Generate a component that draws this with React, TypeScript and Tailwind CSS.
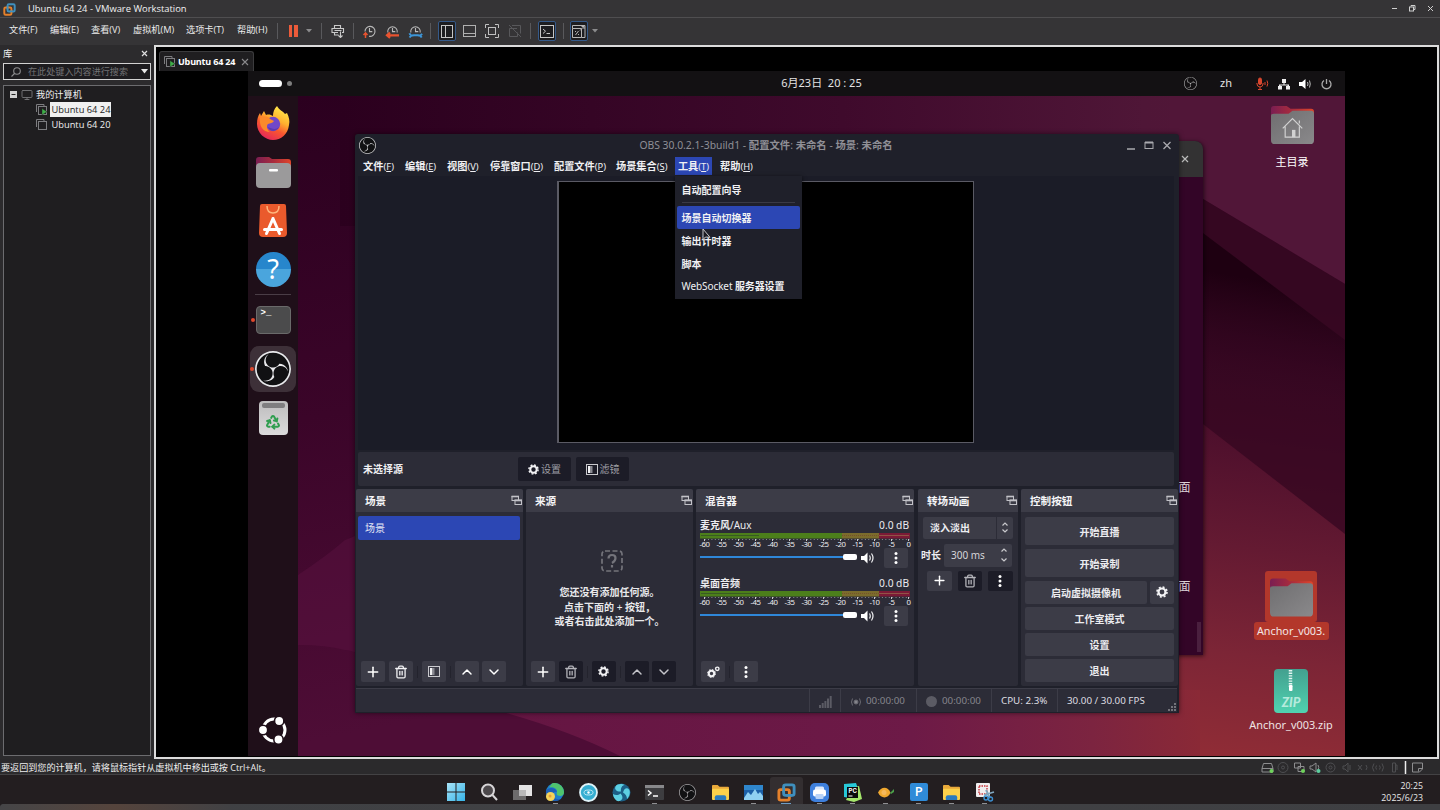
import React from 'react';
import { SiObsstudio } from 'react-icons/si';
import {
  Monitor, Plus, Trash2, ChevronUp, ChevronDown, Recycle,
} from 'lucide-react';

const CJK = /([\u3000-\u9fff\uff00-\uffef]+)/;

/** Chinese runs are set bold, Latin runs regular. */
function Mix({ children }: { children: string }) {
  return (
    <>
      {children.split(CJK).map((s, i) => (i % 2 ? <b key={i} className="font-bold">{s}</b> : <span key={i}>{s}</span>))}
    </>
  );
}

const Sep = ({ w }: { w: string }) => (
  <div className={`flex justify-center ${w}`}><div className="h-[16px] w-px bg-[#59595c]" /></div>
);

const Caret = () => <svg width="6" height="4"><path d="M0 0h6L3 3.5z" fill="#8b8b8d" /></svg>;

function VmwareLogo({ size }: { size: number }) {
  return (
    <svg width={size} height={size} viewBox="0 0 20 20" fill="none">
      <rect x="7" y="2" width="11" height="11" rx="2" stroke="#3f8fbd" strokeWidth="3" />
      <rect x="2" y="7" width="11" height="11" rx="2" stroke="#e5812b" strokeWidth="3" />
      <path d="M7 10V4.500M10 13h6" stroke="#3f8fbd" strokeWidth="2.800" />
    </svg>
  );
}

function ClockIcon({ kind }: { kind: number }) {
  return (
    <svg width="15" height="15" viewBox="0 0 15 15" fill="none" stroke="#b9b9b9" strokeWidth="1.1">
      {kind === 0 ? <path d="M3 7.500A5 5 0 1 1 7 12.300" /> : <path d="M2.800 8.500A4.800 4.800 0 1 1 12.200 8.500" />}
      <path d="M7.500 4v3.600h2.800" />
      {kind === 0 && <path d="M3.500 8.500v5.500M1.500 11l2-2.200 2 2.200" stroke="#e9532f" strokeWidth="1.500" />}
      {kind === 1 && <path d="M2 11.300h12M5 8.700L2 11.300 5 13.900" stroke="#e9532f" strokeWidth="2.200" />}
      {kind === 2 && <path d="M1.500 9.300c.5 2 2.500 2.600 4 2h4.500c1.500.6 3.200 0 4-1.500M1.500 13.500c1-1.500 2-2 3.500-2.200M10.500 11.300c1.500 0 2.500.8 3.200 2.200" stroke="#3d96d8" strokeWidth="1.900" />}
    </svg>
  );
}

const Boxed = ({ children }: { children: React.ReactNode }) => (
  <div className="flex h-[20px] w-[18px] items-center justify-center rounded-[2px] border border-[#355a8a] bg-[#1d1d20]">{children}</div>
);

function TitleBar() {
  return (
    <header className="flex h-[17px] items-center bg-[#353436] text-[9.400px] text-[#f2f2f2]">
      <div className="flex w-[28px] justify-start pt-px pl-[3px]"><VmwareLogo size={13} /></div>
      <div className="flex-1 pt-px">Ubuntu 64 24 - VMware Workstation</div>
      <svg width="48" height="9" fill="none" stroke="#cfcfcf" strokeWidth="1" className="mr-px">
        <path d="M1 4.500h5M37 2l5 5M42 2l-5 5" />
        <rect x="18.500" y="3" width="4" height="4" />
        <path d="M20 2.500V1.500h4v4h-1" />
      </svg>
    </header>
  );
}

function Toolbar() {
  const menus: [string, string][] = [
    ['文件(F)', 'w-[41px]'], ['编辑(E)', 'w-[41px]'], ['查看(V)', 'w-[42px]'],
    ['虚拟机(M)', 'w-[53px]'], ['选项卡(T)', 'w-[51px]'], ['帮助(H)', 'w-[33px]'],
  ];
  return (
    <nav className="flex h-[28px] items-center border-t border-[#4f4e50] bg-[#353436] pb-px pl-[9px] text-[9.200px] text-[#ececec]">
      {menus.map(([m, w]) => <div key={m} className={`pb-[2px] whitespace-nowrap ${w}`}>{m}</div>)}
      <Sep w="w-[14px]" />
      <div className="flex w-[18px] justify-center gap-[2px]"><i className="h-[12px] w-[3.500px] bg-[#ec5b3a]" /><i className="h-[12px] w-[3.500px] bg-[#ec5b3a]" /></div>
      <div className="flex w-[13px] justify-center"><Caret /></div>
      <Sep w="w-[12px]" />
      <div className="flex w-[21px] justify-center">
        <svg width="14" height="14" viewBox="0 0 14 14" fill="none" stroke="#c9c9c9" strokeWidth="1.100">
          <path d="M3.500 4.500v-3h6v3M7 8.500H1v-4h11.500v4H11M3.500 8.500v2.500H7.500M3.500 6.500h7M9.500 7.500v6M7.500 11.500l2 2 2-2" />
        </svg>
      </div>
      <Sep w="w-[11px]" />
      <div className="flex w-[21px] justify-center"><ClockIcon kind={0} /></div>
      <div className="flex w-[25px] justify-center"><ClockIcon kind={1} /></div>
      <div className="flex w-[20px] justify-center"><ClockIcon kind={2} /></div>
      <Sep w="w-[11px]" />
      <div className="flex w-[22px] justify-center">
        <Boxed><svg width="12" height="13" fill="none" stroke="#c5c5c5"><rect x=".5" y=".5" width="11" height="12" /><path d="M4.500 1v11" /></svg></Boxed>
      </div>
      <div className="flex w-[23px] justify-center"><svg width="13" height="12" fill="none" stroke="#b0b0b0"><rect x=".5" y=".5" width="12" height="11" /><path d="M1 8.500h11" /></svg></div>
      <div className="flex w-[22px] justify-center"><svg width="14" height="14" fill="none" stroke="#c0c0c0"><path d="M.5 4V.5H4M10 .5h3.500V4M13.500 10v3.500H10M4 13.500H.5V10" /><rect x="3.500" y="3.500" width="7" height="7" /></svg></div>
      <div className="flex w-[23px] justify-center"><svg width="14" height="14" fill="none" stroke="#58585b"><path d="M4 1.500h8.500v8M9 4.500H1.500v8H9.500v-4M1 1l12 12" /></svg></div>
      <Sep w="w-[9px]" />
      <div className="flex w-[23px] justify-center">
        <Boxed><svg width="14" height="13" fill="none" stroke="#c5c5c5"><rect x=".5" y=".5" width="13" height="12" /><path d="M3 4l2.500 2.200L3 8.500M6.500 8.500H10" /></svg></Boxed>
      </div>
      <Sep w="w-[10px]" />
      <div className="flex w-[22px] justify-center">
        <Boxed><svg width="14" height="13" fill="none" stroke="#b5b5b5"><path d="M.5 3.500v9h9v-9zM.5 3.500V.5h12.500v12H9.500M8 5.500l4-4M9.500 1.500h2.500V4" /><path d="M3.500 10l3-4M3 6.500h1M6 9.500h1" /></svg></Boxed>
      </div>
      <div className="flex w-[10px] justify-center"><Caret /></div>
    </nav>
  );
}

function VmIcon({ on }: { on?: boolean }) {
  return (
    <svg width="11" height="11" viewBox="0 0 11 11" fill="none" stroke="#7d7d80" strokeWidth="1">
      <path d="M.5 8V.5H8V2" /><rect x="2.500" y="2.500" width="8" height="8" />
      {on && <path d="M6 4.500v6.500L11 7.800z" fill="#3fae49" stroke="#1f1e20" strokeWidth=".4" />}
    </svg>
  );
}

function Library() {
  return (
    <aside className="flex w-[154px] flex-col bg-[#2c2b2d] pl-[3px] pr-[3px] text-[9.200px] text-[#f0f0f0]">
      <div className="flex h-[17px] items-center justify-between pr-[3px]">
        <span>库</span>
        <svg width="7" height="7" stroke="#e0e0e0" strokeWidth="1.200"><path d="M1 1l5 5M6 1L1 6" /></svg>
      </div>
      <div className="mt-px flex h-[17px] w-[148px] items-center border border-[#d2d2d2] bg-[#1d1c1f] pl-[7px] pr-[2px]">
        <svg width="10" height="10" fill="none" stroke="#8b8b8d" strokeWidth="1.100"><circle cx="6" cy="4" r="3.300" /><path d="M3.500 6.500L.5 9.500" /></svg>
        <span className="ml-[7px] flex-1 whitespace-nowrap text-[9.100px] text-[#737375]">在此处键入内容进行搜索</span>
        <svg width="7" height="5"><path d="M0 0h7L3.500 4.500z" fill="#e8e8e8" /></svg>
      </div>
      <div className="mt-[5px] mb-[3px] flex w-[148px] flex-1 flex-col border border-[#6c6c6f] bg-[#1f1e20] pt-[1px]">
        <div className="flex h-[15px] items-center pl-[6px]">
          <svg width="7" height="7"><rect width="7" height="7" fill="#d2d2d2" /><path d="M1.500 3.500h4" stroke="#222" /></svg>
          <Monitor size={12} strokeWidth={1.800} className="ml-[4px] text-[#77777a]" />
          <span className="ml-[3px]">我的计算机</span>
        </div>
        <div className="flex h-[15px] items-center pl-[32px]"><VmIcon on /><span className="ml-[3px] bg-[#f0f0f0] pr-px pl-[1.500px] text-[9.300px] leading-[15px] text-[#1c1c1c]">Ubuntu 64 24</span></div>
        <div className="flex h-[15px] items-center pl-[32px]"><VmIcon /><span className="ml-[3px] pl-[1.500px] text-[9.300px]">Ubuntu 64 20</span></div>
      </div>
    </aside>
  );
}

function ObsLogo({ size, ring }: { size: number; ring?: string }) {
  return (
    <div className={`flex items-center justify-center rounded-full bg-[#111113] ${ring ?? 'text-[#c9c9cc]'}`}>
      <SiObsstudio size={size} />
    </div>
  );
}

function Folder({ house, w, h }: { house?: boolean; w: number; h: number }) {
  return (
    <svg width={w} height={h} viewBox="0 0 44 40">
      <defs>
        <linearGradient id="fb" x1="0" x2="1"><stop offset="0" stopColor="#7a1e52" /><stop offset=".5" stopColor="#a92c3d" /><stop offset="1" stopColor="#e0452a" /></linearGradient>
        <linearGradient id="ff" x1="0" y1="0" x2="1" y2="1"><stop offset="0" stopColor="#6f6e70" /><stop offset="1" stopColor="#8a898b" /></linearGradient>
      </defs>
      <path d="M0 4q0-3 3-3h13l4 3h21q3 0 3 3v15H0z" fill="url(#fb)" />
      <path d="M0 11q0-2 3-2h15l4-3h19q3 0 3 3v27q0 4-4 4H4q-4 0-4-4z" fill="url(#ff)" />
      {house && <><path d="M12 24l10-10 10 10M14.500 22v11h14.500V22M29 16v3" fill="none" stroke="#d2d2d2" strokeWidth="1.200" /><path d="M21.500 25.500h3.500V33h-3.500z" fill="#d2d2d2" /></>}
    </svg>
  );
}

function Firefox() {
  return (
    <svg width="34" height="34" viewBox="0 0 34 34">
      <defs>
        <linearGradient id="fx" x1=".8" y1="0" x2=".3" y2="1"><stop offset="0" stopColor="#fff04f" /><stop offset=".4" stopColor="#ffb02e" /><stop offset=".65" stopColor="#f9572f" /><stop offset="1" stopColor="#e5255c" /></linearGradient>
      </defs>
      <path d="M21 0c2 4 6 5 8 8l2-1c2 4 3 8 2 12-1 9-8 15-16 15S1 27 1 18c0-5 1-8 3-11l1 3 3-5 2 4c3-1 5 0 7 1 0-4 1-7 4-10z" fill="url(#fx)" />
      <circle cx="17" cy="18" r="7.200" fill="#7048c9" />
      <path d="M4 12c4-2 8-2 10 1l4 2c-1 2-4 2-6 3-2 2-1 6 2 8-7 0-11-6-10-14z" fill="#fb8a2b" />
      <path d="M12 21c1 5 9 5 11 0-3 3-7 2-11 0z" fill="#5a3bb0" />
    </svg>
  );
}

function Dock() {
  return (
    <div className="flex w-[50px] flex-col items-center bg-[#1f0f19]">
      <div className="mt-[10px]"><Firefox /></div>
      <svg className="mt-[16px]" width="35" height="32" viewBox="0 0 35 32">
        <path d="M0 4q0-3 3-3h10l3 2h16q3 0 3 3v8H0z" fill="url(#fb)" />
        <rect y="7" width="35" height="25" rx="4" fill="#9b9a9b" /><rect x="13" y="13" width="9" height="2.600" rx="1" fill="#fff" />
      </svg>
      <svg className="mt-[16px]" width="28" height="33" viewBox="0 0 28 33">
        <path d="M3 0h22q2 0 2 2l1 27q0 4-4 4H4q-4 0-4-4L1 2q0-2 2-2z" fill="#ea5a2c" />
        <path d="M8 2q0 7 6 7t6-7" fill="none" stroke="#ffb57b" strokeWidth="1.500" />
        <path d="M14 14.500L7.500 29.500M14 14.500l6.500 15M5.500 25.500h17" fill="none" stroke="#fff" strokeWidth="3" strokeLinecap="round" />
      </svg>
      <div className="mt-[15px] flex h-[35px] w-[35px] items-center justify-center rounded-full bg-linear-to-b from-[#2786cc] from-50% to-[#4aa5dd] to-50% font-['Noto_Sans'] text-[27px] text-white">?</div>
      <div className="mt-[7px] h-px w-[36px] bg-[#4a3d46]" />
      <div className="relative mt-[11px] flex w-full items-center justify-center">
        <i className="absolute top-[12px] left-[3px] h-[4px] w-[4px] rounded-full bg-[#e0482d]" />
        <div className="flex h-[28px] w-[35px] rounded-[4px] border border-[#6a6a6a] bg-[#4b4b4c] pl-[4px] font-['Liberation_Mono'] text-[9px] leading-[13px] font-bold text-white">&gt;_</div>
      </div>
      <div className="relative mt-[12px] flex h-[46px] w-[46px] items-center justify-center rounded-[9px] bg-[#3d3038]">
        <i className="absolute top-[21px] left-0 h-[4px] w-[4px] rounded-full bg-[#e0482d]" />
        <ObsLogo size={36} ring="text-[#e9e9ec]" />
      </div>
      <div className="mt-[9px] flex h-[34px] w-[29px] flex-col items-center rounded-[4px] bg-linear-to-b from-[#bdbcbd] to-[#dcdbdc] pt-[2px]">
        <div className="h-[5px] w-[23px] rounded-[2px] bg-[#7f7e80]" />
        <Recycle size={16} strokeWidth={3} className="mt-[6px] text-[#2f9e4f]" />
      </div>
      <div className="flex-1" />
      <svg className="mb-[12px]" width="28" height="28" viewBox="0 0 28 28" fill="none">
        <circle cx="15" cy="14" r="11" stroke="#fff" strokeWidth="3" />
        {[[4, 14], [20.200, 5], [19.500, 23.500]].map(([x, y]) => (
          <circle key={y} cx={x} cy={y} r="4.700" fill="#fff" stroke="#1f0f19" strokeWidth="1.600" />
        ))}
      </svg>
    </div>
  );
}

function GnomeBar() {
  return (
    <div className="grid h-[25px] grid-cols-3 items-center bg-[#131113] text-[#e3e3e3]">
      <div className="flex items-center gap-[5px] pl-[11px]"><i className="h-[7px] w-[23px] rounded-full bg-white" /><i className="h-[5px] w-[5px] rounded-full bg-[#7e7e7e]" /></div>
      <div className="pl-[50px] text-center text-[11px] whitespace-nowrap">6月23日&nbsp; 20 : 25</div>
      <div className="flex items-center justify-end pr-[13px] text-[11px]">
        <SiObsstudio size={13} className="text-[#b4b4b4]" />
        <span className="ml-[23px]">zh</span>
        <svg className="ml-[24px]" width="14" height="14" fill="none" stroke="#d9472e"><rect x="2.500" y="1" width="3" height="6.500" rx="1.500" fill="#d9472e" /><path d="M.8 6q0 4 3.200 4t3.200-4M4 10v3M2 12.500h4M9 5v3M11 3.500q1.500 3 0 6" /></svg>
        <svg className="ml-[8px]" width="12" height="12" fill="#eee"><path d="M4 1h4v4H6.500v1.500H11V8h1v3.500H8V8h1.500V7.500h-7V8H4v3.500H0V8h1V6.500h4.500V5H4z" /></svg>
        <svg className="ml-[9px]" width="12" height="12" fill="none" stroke="#bbb"><path d="M0 4h3l3.500-3v10L3 8H0z" fill="#fff" stroke="none" /><path d="M8.500 4q1 2 0 4M10.500 2.500q1.500 3.500 0 7" /></svg>
        <svg className="ml-[10px]" width="11" height="12" fill="none" stroke="#a9a9a9" strokeWidth="1.300"><path d="M3 2.500a4.500 4.500 0 1 0 5 0M5.500 1v5" /></svg>
      </div>
    </div>
  );
}

const Popout = () => (
  <svg width="11" height="11" viewBox="0 0 11 11" fill="none" stroke="#c2c2c8">
    <rect x="1" y="1.500" width="6.500" height="4" /><path d="M.5 1.500H8" strokeWidth="1.600" />
    <rect x="4" y="5" width="6.500" height="4.500" fill="#3c3c47" /><path d="M3.500 5.500H11" strokeWidth="1.600" />
  </svg>
);

function Panel({ title, w, children }: { title: string; w: string; children: React.ReactNode }) {
  return (
    <section className={`flex h-full shrink-0 flex-col rounded-[2px] bg-[#2c2c37] ${w}`}>
      <div className="flex h-[23px] shrink-0 items-center justify-between rounded-t-[2px] bg-[#3c3c47] pr-[1px] pl-[9px] text-[10.600px] font-bold text-[#f4f4f6]">
        <span className="pt-[3px]">{title}</span><Popout />
      </div>
      {children}
    </section>
  );
}

function Btn({ children, dark, cls = 'h-[21px] w-[24px]' }: { children: React.ReactNode; dark?: boolean; cls?: string }) {
  return <div className={`flex shrink-0 items-center justify-center rounded-[2px] ${dark ? 'bg-[#1c1c27]' : 'bg-[#3c3c47]'} ${cls}`}>{children}</div>;
}

const Gear = ({ size = 11 }: { size?: number }) => (
  <svg width={size} height={size} viewBox="0 0 12 12" fill="none" stroke="#f3f3f5"><circle cx="6" cy="6" r="3.500" strokeWidth="2.200" /><circle cx="6" cy="6" r="5" strokeWidth="1.600" strokeDasharray="2 1.930" /></svg>
);
const Bin = ({ dim }: { dim?: boolean }) => <Trash2 size={14} strokeWidth={2.200} className={dim ? 'text-[#b4b4ba]' : 'text-[#f3f3f5]'} />;
const Filter = () => <svg width="12" height="11" fill="none" stroke="#c9c9cd"><rect x=".5" y=".5" width="11" height="10" /><path d="M2 2h2.500v7H2z" fill="#f0f0f2" stroke="none" /><path d="M5.500 2v7" stroke="#8a8a92" strokeWidth="2" /></svg>;
const Dots = () => <svg width="4" height="14" fill="#fff"><circle cx="2" cy="2.500" r="1.500" /><circle cx="2" cy="7" r="1.500" /><circle cx="2" cy="11.500" r="1.500" /></svg>;
const TSep = () => <div className="mx-[4px] h-[12px] w-px bg-[#23232d]" />;

function ListTools({ dim }: { dim?: boolean }) {
  return (
    <div className="mb-[4px] flex items-center pl-[5px]">
      <Btn><Plus size={16} strokeWidth={2.300} className="text-white" /></Btn>
      <div className="w-[3.500px]" /><Btn dark={dim}><Bin dim={dim} /></Btn>
      <TSep /><Btn dark={dim}>{dim ? <Gear /> : <Filter />}</Btn>
      <TSep /><Btn dark={dim}><ChevronUp size={16} strokeWidth={2.200} className={dim ? 'text-[#c4c4ca]' : 'text-white'} /></Btn>
      <div className="w-[3.500px]" /><Btn dark={dim}><ChevronDown size={16} strokeWidth={2.200} className={dim ? 'text-[#c4c4ca]' : 'text-white'} /></Btn>
    </div>
  );
}

function Channel({ name }: { name: string }) {
  const marks = ['-60', '-55', '-50', '-45', '-40', '-35', '-30', '-25', '-20', '-15', '-10', '-5', '0'];
  return (
    <div className="flex h-[58px] flex-col pr-[5px] pl-[4px] text-[#ececf0]">
      <div className="flex h-[15px] items-center justify-between pt-[2px] text-[10px]"><span><Mix>{name}</Mix></span><span className="text-[10.200px]">0.0 dB</span></div>
      <svg className="mt-px" width="210" height="8">
        <rect width="142" height="5.500" fill="#4c7f1b" /><rect x="142" width="37" height="5.500" fill="#7b6c2c" /><rect x="179" width="31" height="5.500" fill="#7b1a36" />
        <path d="M1 2.500h58" stroke="#395a22" /><path d="M142 2.500h37" stroke="#75502b" strokeDasharray="1 1" /><path d="M179 2.500h30" stroke="#8f5446" />
        <path d="M4.600 6.500h205" stroke="#8d8d94" strokeWidth="1" strokeDasharray="1 2.410" />
        {marks.map((m, i) => <path key={m} d={`M${4.500 + i * 17} 6v2`} stroke="#c9c9cd" strokeWidth="1" />)}
      </svg>
      <div className="-mt-px -ml-[4px] flex w-[221px] text-[7.800px] leading-[8px] tracking-[-0.500px]">{marks.map((m) => <span key={m} className="w-[17px] text-center">{m}</span>)}</div>
      <div className="flex items-center">
        <div className="-mt-[2px] flex w-[157px] items-center"><i className="h-[2.500px] w-[143px] bg-[#2f87d9]" /><i className="h-[6px] w-[14px] rounded-[2px] bg-white" /></div>
        <svg className="-mt-px ml-[4px]" width="13" height="12" fill="none" stroke="#f2f2f4" strokeWidth="1.200"><path d="M0 4h3l3.500-3.500v11L3 8H0z" fill="#fff" stroke="none" /><path d="M8.500 3.500q1.500 2.500 0 5M10.500 1.500q3 4.500 0 9" /></svg>
        <div className="flex-1" />
        <Btn cls="mr-px h-[20px] w-[24px]"><Dots /></Btn>
      </div>
    </div>
  );
}

function Spin({ gap }: { gap: string }) {
  return <div className={`flex flex-col items-center ${gap}`}><svg width="6" height="4" fill="none" stroke="#c9c9cd" strokeWidth="1.200"><path d="M.5 3.500L3 1l2.500 2.500" /></svg><svg width="6" height="4" fill="none" stroke="#c9c9cd" strokeWidth="1.200"><path d="M.5.5L3 3 5.500.5" /></svg></div>;
}

function ObsWindow() {
  const menus: [string, string, string][] = [
    ['文件', 'F', 'w-[42px]'], ['编辑', 'E', 'w-[42px]'], ['视图', 'V', 'w-[43px]'], ['停靠窗口', 'D', 'w-[64px]'],
    ['配置文件', 'P', 'w-[62px]'], ['场景集合', 'S', 'w-[59px]'], ['工具', 'T', 'w-[37px]'], ['帮助', 'H', 'w-[42px]'],
  ];
  return (
    <div className="absolute top-[63px] left-[107px] flex h-[579px] w-[824px] flex-col rounded-t-[3px] bg-[#1f202a] font-['Noto_Sans','Noto_Sans_CJK_SC',sans-serif] shadow-[0_0_5px_#0008]">
      <div className="flex h-[22px] items-center pr-[7px] pl-[4px] text-[10.350px] text-[#8f8f96]">
        <ObsLogo size={17} />
        <div className="flex-1 pt-[2px] pl-[30px] text-center whitespace-nowrap"><Mix>OBS 30.0.2.1-3build1 - 配置文件: 未命名 - 场景: 未命名</Mix></div>
        <svg width="46" height="11" fill="none" stroke="#a9a9ae" strokeWidth="1.300"><path d="M1 9h8M37.500 2l7 7M44.500 2l-7 7" /><rect x="19" y="2.500" width="8" height="6" strokeWidth="1" /><path d="M19 2.500h8" strokeWidth="2" /></svg>
      </div>
      <div className="flex h-[20px] items-center pl-[8px] text-[10.200px] text-[#f0f0f3]">
        {menus.map(([m, k, w]) => (
          <div key={k} className={`flex h-[18px] items-center pt-[2px] whitespace-nowrap ${w} ${k === 'T' ? 'mr-[8px] justify-center bg-[#2c47b4]' : ''}`}>
            <b>{m}</b><span className="text-[9.300px]">(<u>{k}</u>)</span>
          </div>
        ))}
      </div>
      <div className="mr-[5px] ml-[3px] flex h-[274px] bg-[#1b1c27] pt-[5px] pl-[199px]">
        <div className="h-[262px] w-[417px] border border-l-2 border-[#5a5a64] bg-black" />
      </div>
      <div className="mt-[2px] mr-[5px] ml-[3px] flex h-[34px] items-center rounded-[2px] bg-[#2c2c37] pl-[5px] text-[10px] text-[#f0f0f3]">
        <b className="w-[155px] pt-px">未选择源</b>
        <Btn dark cls="h-[24px] w-[53px] gap-[2px]"><Gear /><span className="pt-px text-[#9d9da3]">设置</span></Btn>
        <Btn dark cls="ml-[5px] h-[24px] w-[53px] gap-[2px]"><Filter /><span className="pt-px text-[#9d9da3]">滤镜</span></Btn>
      </div>
      <div className="mt-[3px] flex h-[197px] pl-px">
        <Panel title="场景" w="w-[167px]">
          <div className="mt-[4px] ml-[2px] flex h-[24px] w-[162px] items-center rounded-[2px] bg-[#2c47b4] pt-px pl-[7px] text-[10px] text-[#e4e7f4]">场景</div>
          <div className="flex-1" /><ListTools />
        </Panel>
        <div className="w-[3px] shrink-0" />
        <Panel title="来源" w="w-[167px]">
          <div className="flex flex-1 flex-col items-center pt-[38px] text-[10px] leading-[14.500px] font-bold text-[#e8e8eb]">
            <svg className="ml-[5px] mb-[13px]" width="22" height="22" fill="none" stroke="#74747b" strokeWidth="1.700"><rect x="1" y="1" width="20" height="20" rx="3" strokeDasharray="5 2.500" /><path d="M7.500 8.500q0-3.500 3.500-3.500t3.500 3-3.500 5M11 15v2.500" strokeWidth="2.200" /></svg>
            <div>您还没有添加任何源。</div><div>点击下面的 <span className="font-normal">+</span> 按钮，</div><div>或者右击此处添加一个。</div>
          </div>
          <ListTools dim />
        </Panel>
        <div className="w-[3px] shrink-0" />
        <Panel title="混音器" w="w-[218px]">
          <div className="h-[5px]" /><Channel name="麦克风/Aux" /><Channel name="桌面音频" />
          <div className="flex-1" />
          <div className="mb-[4px] flex items-center pl-[5px]">
            <Btn><svg width="13" height="12" fill="none" stroke="#f3f3f5"><circle cx="4.500" cy="7.500" r="2.700" strokeWidth="2" /><circle cx="4.500" cy="7.500" r="4" strokeDasharray="1.600 1.540" /><circle cx="10.300" cy="2.800" r="1.700" strokeWidth="1.400" /></svg></Btn>
            <TSep /><Btn><Dots /></Btn>
          </div>
        </Panel>
        <div className="w-[4px] shrink-0" />
        <Panel title="转场动画" w="w-[100px]">
          <div className="mt-[4.500px] ml-[5px] flex h-[22px] w-[90px] rounded-[2px] bg-[#3c3c47] text-[10px] font-bold text-[#ececf0]">
            <span className="flex w-[74px] items-center border-r border-[#2c2c37] pt-[2px] pl-[7px]">淡入淡出</span><div className="flex flex-1 items-center justify-center"><Spin gap="gap-[3px]" /></div>
          </div>
          <div className="mt-[5px] ml-[3px] flex items-center text-[10px] text-[#ececf0]">
            <b className="w-[23px] pt-px">时长</b>
            <div className="flex h-[23px] w-[68px] items-center justify-between rounded-[2px] bg-[#3c3c47] pr-[5px] pl-[7px] text-[#d5d5da]">300 ms<Spin gap="gap-[6px]" /></div>
          </div>
          <div className="mt-[4px] ml-[9px] flex gap-[6px]">
            <Btn cls="h-[20px] w-[24.500px]"><Plus size={15} strokeWidth={2.300} className="text-white" /></Btn>
            <Btn dark cls="h-[20px] w-[24.500px]"><Bin dim /></Btn>
            <Btn dark cls="h-[20px] w-[24.500px]"><Dots /></Btn>
          </div>
        </Panel>
        <div className="w-[3px] shrink-0" />
        <Panel title="控制按钮" w="w-[157px]">
          <div className="flex flex-col gap-[3.500px] pt-[4.500px] pr-[4px] pl-[4px] text-[10px] font-bold text-[#ececf0]">
            <Btn cls="h-[28.500px] pt-[3px]">开始直播</Btn>
            <Btn cls="h-[28.500px] pt-[3px]">开始录制</Btn>
            <div className="flex gap-[3px]"><Btn cls="h-[23px] w-[122px] pt-[2px]">启动虚拟摄像机</Btn><Btn cls="h-[23px] w-[24px]"><Gear size={12} /></Btn></div>
            <Btn cls="h-[22.500px] pt-[3px]">工作室模式</Btn>
            <Btn cls="h-[22.500px] pt-[3px]">设置</Btn>
            <Btn cls="h-[22.500px] pt-[3px]">退出</Btn>
          </div>
        </Panel>
      </div>
      <div className="mt-[2px] mr-[2px] ml-px flex h-[24px] border-t border-[#3c3c47] bg-[#2c2c37] text-[9.800px] text-[#dedee2] *:flex *:items-center *:pt-[2px] *:whitespace-nowrap">
        <div className="w-[453px]" />
        <div className="w-[31px] justify-center border-l border-[#3c3c47]"><svg width="13" height="12" fill="#5b5b64"><path d="M0 9h2v3H0zM2.700 7h2v5h-2zM5.400 5h2v7h-2zM8 2.500h2V12H8zM10.700 0h2v12h-2z" /></svg></div>
        <div className="w-[76px] gap-[4px] border-l border-[#3c3c47] pl-[9px] text-[#85858c]"><svg width="12" height="10" fill="none" stroke="#6a6a72"><circle cx="6" cy="5" r="2" fill="#85858c" /><path d="M2.500 1.500q-2 3.500 0 7M9.500 1.500q2 3.500 0 7" /></svg>00:00:00</div>
        <div className="w-[75px] gap-[5px] border-l border-[#3c3c47] pl-[9px] text-[#85858c]"><i className="h-[11px] w-[11px] rounded-full bg-[#5b5b64]" />00:00:00</div>
        <div className="w-[66px] border-l border-[#3c3c47] pl-[9px]">CPU: 2.3%</div>
        <div className="flex-1 border-l border-[#3c3c47] pl-[9px]">30.00 / 30.00 FPS</div>
        <svg className="mt-[11px]" width="10" height="12" fill="#74747b"><path d="M7 1h2v2H7zM4 4h2v2H4zM7 4h2v2H7zM1 7h2v2H1zM4 7h2v2H4zM7 7h2v2H7z" /></svg>
      </div>
      <div className="absolute top-[42px] left-[320px] flex w-[127px] flex-col bg-[#1f202a] px-[2px] pt-[2px] pb-[1px] text-[10px] text-[#f0f0f3] shadow-[0_1px_4px_#000a]">
        <div className="flex h-[23px] items-center pt-px pl-[4.500px]"><Mix>自动配置向导</Mix></div>
        <div className="mx-[5px] mt-[1px] mb-[3px] h-px bg-[#3a3a45]" />
        <div className="flex h-[23px] items-center rounded-[2px] bg-[#2c47b4] pt-px pl-[4.500px]"><Mix>场景自动切换器</Mix></div>
        <div className="flex h-[23px] items-center pt-px pl-[4.500px]"><Mix>输出计时器</Mix></div>
        <div className="flex h-[23px] items-center pt-px pl-[4.500px]"><Mix>脚本</Mix></div>
        <div className="flex h-[23px] items-center pl-[4.500px] tracking-[-0.100px] whitespace-pre"><Mix>WebSocket 服务器设置</Mix></div>
      </div>
      <svg className="absolute top-[94px] left-[347px]" width="10" height="14" fill="#1b1b22" stroke="#c5c5c8" strokeWidth="1"><path d="M1 1v10.500l2.500-2.500 4.500.3z" /></svg>
    </div>
  );
}

function Desktop() {
  return (
    <div className="relative flex-1 overflow-hidden">
      <svg className="absolute inset-0" width="1047" height="660" viewBox="298 96 1047 660">
        <defs>
          <linearGradient id="wl" gradientUnits="userSpaceOnUse" x1="298" y1="96" x2="420" y2="720"><stop offset="0" stopColor="#2b001f" /><stop offset=".5" stopColor="#3b0529" /><stop offset="1" stopColor="#4e0d36" /></linearGradient>
          <linearGradient id="wt" x1="0" x2="1"><stop offset="0" stopColor="#2b001e" /><stop offset=".5" stopColor="#3f0a2c" /><stop offset=".8" stopColor="#4f1637" /><stop offset="1" stopColor="#551739" /></linearGradient>
          <linearGradient id="wr" gradientUnits="userSpaceOnUse" x1="1300" y1="300" x2="1240" y2="756"><stop offset="0" stopColor="#3a0826" /><stop offset=".3" stopColor="#4d0f2c" /><stop offset=".55" stopColor="#641a32" /><stop offset=".78" stopColor="#7c2536" /><stop offset="1" stopColor="#8f2c36" /></linearGradient>
          <linearGradient id="ws" gradientUnits="userSpaceOnUse" x1="1203" y1="270" x2="1180" y2="400"><stop offset="0" stopColor="#1e0011" /><stop offset="1" stopColor="#3a0826" stopOpacity="0" /></linearGradient>
          <linearGradient id="wb" x1="0" x2="1"><stop offset="0" stopColor="#641542" /><stop offset=".6" stopColor="#6d1a47" /><stop offset=".85" stopColor="#7c2440" /><stop offset="1" stopColor="#8a2936" /></linearGradient>
        </defs>
        <path d="M298 96h1047v660H298z" fill="url(#wl)" />
        <path d="M340 96h1005v130H340z" fill="url(#wt)" />
        <path d="M1170 176h175v580h-175z" fill="url(#wr)" />
        <path d="M1170 96h175v188L1203 199l-33-20z" fill="#511638" />
        <path d="M1203 199l142 85v250l-142-110z" fill="#340720" opacity=".75" />
        <path d="M1203 233l142 107v194l-142-80z" fill="url(#ws)" />
        <path d="M480 690h720v66H620q-60-30-140-50z" fill="url(#wb)" />
        <path d="M345 540q10-4 15-6v120q-10-4-15-4-20-5-47-5v-70q30-20 47-35z" fill="#59123f" opacity=".5" />
      </svg>
    </div>
  );
}

function TerminalWindow() {
  return (
    <div className="absolute top-[70px] left-[850px] flex h-[514px] w-[105px] flex-col rounded-tr-[8px] bg-[#330527] shadow-[1px_1px_4px_#0009]">
      <div className="flex h-[36px] items-center justify-end rounded-tr-[8px] bg-[#333233] pr-[14px]"><svg width="8" height="8" stroke="#bcbcbc" strokeWidth="1.200"><path d="M1 1l6 6M7 1L1 7" /></svg></div>
      <div className="flex justify-end pt-[302px] pr-[12.500px] text-[12px] leading-[18px] text-[#ddd5da]">面</div>
      <div className="flex justify-end pt-[81px] pr-[12.500px] text-[12px] leading-[18px] text-[#ddd5da]">面</div>
      <div className="mt-[26px] mr-[2px] h-[30px] w-[4px] self-end bg-[#4a1f3e]" />
    </div>
  );
}

function VirtualMachine() {
  return (
    <main className="flex w-[1285px] flex-col border-2 border-[#dcdcdc] bg-black pt-[4px] pl-[3px]">
      <div className="flex h-[20px] w-[95px] items-center rounded-t-[3px] border border-b-0 border-[#3b3b3d] bg-[#1f1e20] pl-[4px]">
        <VmIcon on /><span className="ml-[3px] flex-1 text-[9px] font-bold tracking-[-0.180px] whitespace-nowrap text-white">Ubuntu 64 24</span>
        <svg className="mr-[4px]" width="8" height="8" stroke="#8a8a8c" strokeWidth="1.100"><path d="M1 1l6 6M7 1L1 7" /></svg>
      </div>
      <div className="relative ml-[89px] flex h-[685px] w-[1097px] flex-col overflow-hidden font-['Noto_Sans','Noto_Sans_CJK_SC',sans-serif]">
        <GnomeBar />
        <div className="flex min-h-0 flex-1"><Dock /><Desktop /></div>
        <TerminalWindow />
        <ObsWindow />
        <div className="absolute top-[33px] left-[1014px] flex w-[60px] flex-col items-center text-[11px] text-white"><Folder house w={43} h={41} /><span className="mt-[9px] leading-[16px]">主目录</span></div>
        <div className="absolute top-[500px] left-[1005px] flex w-[76px] flex-col items-center text-[10.800px] text-[#f3e6e4]">
          <div className="flex h-[51px] w-[52px] items-center justify-center rounded-[3px] bg-[#b3372b]"><Folder w={43} h={40} /></div>
          <span className="flex h-[18px] w-[75px] items-center justify-center rounded-[3px] bg-[#b3372b]">Anchor_v003.</span>
        </div>
        <div className="absolute top-[598px] left-[993px] flex w-[100px] flex-col items-center text-[10.900px] text-[#efe3e4]">
          <svg width="34" height="44" viewBox="0 0 34 44">
            <defs><linearGradient id="zp" x1="0" y1="0" x2="0" y2="1"><stop offset="0" stopColor="#43a08f" /><stop offset="1" stopColor="#50d2b0" /></linearGradient></defs>
            <rect width="34" height="44" rx="4" fill="url(#zp)" />
            <path d="M16.500 1v17" stroke="#e6f6f2" strokeWidth="3.500" strokeDasharray="1.400 1.200" /><rect x="15" y="16" width="3.500" height="6" rx="1" fill="#fff" />
            <text x="17" y="38" textAnchor="middle" fontSize="13" fontWeight="900" fontStyle="italic" fontFamily="Lato" fill="#b5eadc">ZIP</text>
          </svg>
          <span className="mt-[4px] leading-[16px]">Anchor_v003.zip</span>
        </div>
      </div>
    </main>
  );
}

function StatusBar() {
  return (
    <div className="flex h-[16px] items-center justify-between border-b border-[#434244] bg-[#2b2a2c] pt-[2px] pr-[16px] pl-px text-[9.080px] text-[#efefef]">
      <span className="whitespace-nowrap">要返回到您的计算机，请将鼠标指针从虚拟机中移出或按 Ctrl+Alt。</span>
      <svg width="163" height="13" fill="none" stroke="#8d8d8f">
        <path d="M2.500 2.500h8l1.500 5v3.500H1V7.500zM1 7.500h11" />
        <g stroke="#4e4e51"><circle cx="22" cy="6.500" r="5" /><circle cx="22" cy="6.500" r="1.500" /><circle cx="69.500" cy="6.500" r="4.500" /><circle cx="69.500" cy="6.500" r="1.500" /><path d="M82 5h2l3-3v9l-3-3h-2zM89 4v5M97 4l4 5M101 4l-4 5M105 4q2 2.500 0 5M113 2.500q-3 4 0 8M121 2.500q3 4 0 8M115.500 4.500q-1.500 2 0 4M118.500 4.500q1.500 2 0 4M131.500 2h3v9h-3zM134 4h2v5" /></g>
        <path d="M33.500 2h6v5h-6zM37 5.500h6v5h-6zM49 5h2l4-3v9l-4-3h-2zM57 4q1.500 2.500 0 5" />
        <g fill="#6fd35c" stroke="none"><circle cx="10.500" cy="10" r="2" /><circle cx="42" cy="10" r="2" /><circle cx="57.500" cy="10" r="2" fill="#5ccf9f" /></g>
        <path d="M144.500 0v13" stroke="#eee" strokeWidth="1.500" />
        <path d="M151.500 2h10v6l-3 3h-7zM161 7.500h-3.500v3" />
      </svg>
    </div>
  );
}

function Explorer() {
  return <svg width="19" height="17" viewBox="0 0 20 18"><path d="M1 2q0-1 1-1h5l2 2h9q1 0 1 1v5H1z" fill="#e9a93a" /><rect x="1" y="5" width="18" height="12" rx="1" fill="#fbd14b" /><path d="M4 17v-3q0-2 2-2h8q2 0 2 2v3" fill="#2a7bbf" /></svg>;
}

function Taskbar() {
  const icons: React.ReactNode[] = [
    <svg width="18" height="18"><defs><linearGradient id="wn" x1="0" y1="0" x2="1" y2="1"><stop offset="0" stopColor="#a8e3f7" /><stop offset="1" stopColor="#35b4e8" /></linearGradient></defs><path d="M0 0h8.500v8.500H0zM9.500 0H18v8.500H9.500zM0 9.500h8.500V18H0zM9.500 9.500H18V18H9.500z" fill="url(#wn)" /></svg>,
    <svg width="18" height="18" fill="#4c484b" stroke="#d7d5d7" strokeWidth="2"><circle cx="8" cy="7.500" r="6" /><path d="M12.500 12l4.500 5" /></svg>,
    <svg width="19" height="17"><rect x="0" y="6" width="13" height="10" fill="#6d6b6c" /><rect x="6" y="1" width="13" height="11" fill="#e4e3e4" /><rect x="6" y="6" width="7" height="6" fill="#b9b8b9" /></svg>,
    <svg width="20" height="20"><circle cx="10" cy="10" r="9" fill="#1e7fcd" /><path d="M7 1.500c6-2 12 3 12 9 0 3-3 4-6 3-2-1-1-2-1-4 0-3-4-5-8-4z" fill="#4fc46d" /><path d="M1 9c3-5 10-3 11 1-3-1-5 1-4 4 1 2 4 4 8 3C9 22 0 17 1 9z" fill="#1c5fb8" /><circle cx="5.500" cy="14.500" r="4.500" fill="#f4d35a" /><circle cx="5" cy="14" r="1.500" fill="#e8a03a" /></svg>,
    <svg width="19" height="19"><circle cx="9.500" cy="9.500" r="8.500" fill="#35aed1" stroke="#dff3f8" strokeWidth="1.800" /><ellipse cx="9.500" cy="9.500" rx="4.500" ry="2.500" fill="none" stroke="#c2ecf7" /><circle cx="9.500" cy="9.500" r="1.200" fill="#fff" /></svg>,
    <svg width="19" height="19"><circle cx="9.500" cy="9.500" r="9" fill="#1c5f86" /><g fill="#5dd0e3"><path d="M9 8.500C5 9 2 6.500 3.500 3.500s7-3 9-1.500c-2.500.5-4 3-3.500 6.500z" /><path d="M11 9.500c1-4 4-5.500 6-3s0 8-2 9.500c0-3-1.500-5-4-6.500z" /><path d="M8.500 10.500c3 3 2.500 6.500-1 7.500S1 14 1 11c2.500 1.500 5 1.500 7.500-.5z" /></g></svg>,
    <svg width="19" height="15"><rect width="19" height="15" rx="1" fill="#3d3d40" /><rect width="19" height="3" fill="#88888b" /><path d="M3 5.500l3 2.500-3 2.500M8 11h5" fill="none" stroke="#fff" strokeWidth="1.500" /></svg>,
    <ObsLogo size={17} ring="text-[#a3a0a3]" />,
    <Explorer />,
    <svg width="19" height="15"><rect width="19" height="15" rx="1" fill="#1b5fa7" /><rect width="19" height="5" fill="#2f86cc" /><path d="M0 13l4-6 3 3 4-6 3 5 2-2 3 4v4H0z" fill="#8fd0f2" /></svg>,
    <VmwareLogo size={19} />,
    <svg width="19" height="19"><rect width="19" height="19" rx="5" fill="#3e80dd" /><rect x="5" y="3.500" width="9" height="5" rx="1.500" fill="#dce9fb" /><rect x="3" y="6.500" width="13" height="7" rx="2" fill="#fff" /><rect x="5.500" y="11" width="8" height="5" rx="1" fill="#b9d3f7" /></svg>,
    <svg width="19" height="19"><path d="M1 1l12-1 2 6-8 9-6-1z" fill="#27c9d8" /><path d="M9 5l7-2 3 13-8 3-8-2z" fill="#a5e66b" /><rect x="4" y="4" width="11" height="11" fill="#0a0a0a" /><text x="5.500" y="9.500" fontSize="6" fontWeight="700" fontFamily="Inter" fill="#fff">PC</text><path d="M5.500 13h4" stroke="#fff" /></svg>,
    <svg width="18" height="13"><path d="M1 6.500C4 0 11 0 13.500 6.500 11 13 4 13 1 6.500z" fill="#f0a82f" /><path d="M13 7l2-2 2-2v3l-3 2z" fill="#4aa04a" /><circle cx="7" cy="6.500" r="2.500" fill="#f6b95c" /></svg>,
    <div className="flex h-[18px] w-[18px] items-center justify-center rounded-[2px] bg-[#2f8bd8] font-['Open_Sans'] text-[13px] font-semibold text-white">P</div>,
    <Explorer />,
    <svg width="20" height="19"><rect x="1" width="14" height="14" rx="1" fill="#f0eff0" /><rect x="4" y="3" width="8" height="8" fill="none" stroke="#c8343a" strokeDasharray="1.500 1" strokeWidth="1.400" /><path d="M9 12l10-3M11 7l4 8" stroke="#7fa6bd" strokeWidth="1.800" /><circle cx="11" cy="15" r="2" fill="none" stroke="#3c8fd0" strokeWidth="1.400" /><circle cx="15.500" cy="16" r="2" fill="none" stroke="#3c8fd0" strokeWidth="1.400" /></svg>,
  ];
  const running = [3, 6, 9, 10, 11, 12, 13, 14, 15, 16];
  return (
    <footer className="flex h-[35px] flex-col bg-[#231e20]">
      <div className="flex h-[29px] pl-[439.500px]">
        {icons.map((ic, i) => (
          <div key={i} className={`mt-[2px] flex h-[27px] w-[33.050px] shrink-0 flex-col items-center ${i === 10 ? 'rounded-t-[3px] bg-[#332e30]' : ''}`}>
            <div className="flex h-[27px] shrink-0 items-center pt-[3px]">{ic}</div>
            {running.includes(i) && <i className={`-mt-px h-[1.500px] shrink-0 ${i === 10 ? 'w-[10px] bg-[#6d9cc4]' : 'w-[5px] bg-[#8f8f92]'}`} />}
          </div>
        ))}
        <div className="flex flex-1 flex-col items-end pt-[5px] pr-[17px] text-[8.800px] leading-[12px] text-[#e8e8e8]"><span>20:25</span><span>2025/6/23</span></div>
      </div>
      <div className="h-[6px] rounded-tl-[4px] bg-linear-to-r from-[#3e4043] via-[#414144] to-[#3e3f42]"><div className="h-full w-[230px] rounded-tl-[4px] bg-linear-to-r from-[#454547] via-[#55443c] to-[#414144]" /></div>
    </footer>
  );
}

export default function App() {
  return (
    <div className="flex h-[810px] w-[1440px] flex-col overflow-hidden bg-[#2c2b2d] font-['Open_Sans','Noto_Sans_CJK_SC',sans-serif]">
      <TitleBar />
      <Toolbar />
      <div className="flex h-[714px]"><Library /><VirtualMachine /></div>
      <StatusBar />
      <Taskbar />
    </div>
  );
}
